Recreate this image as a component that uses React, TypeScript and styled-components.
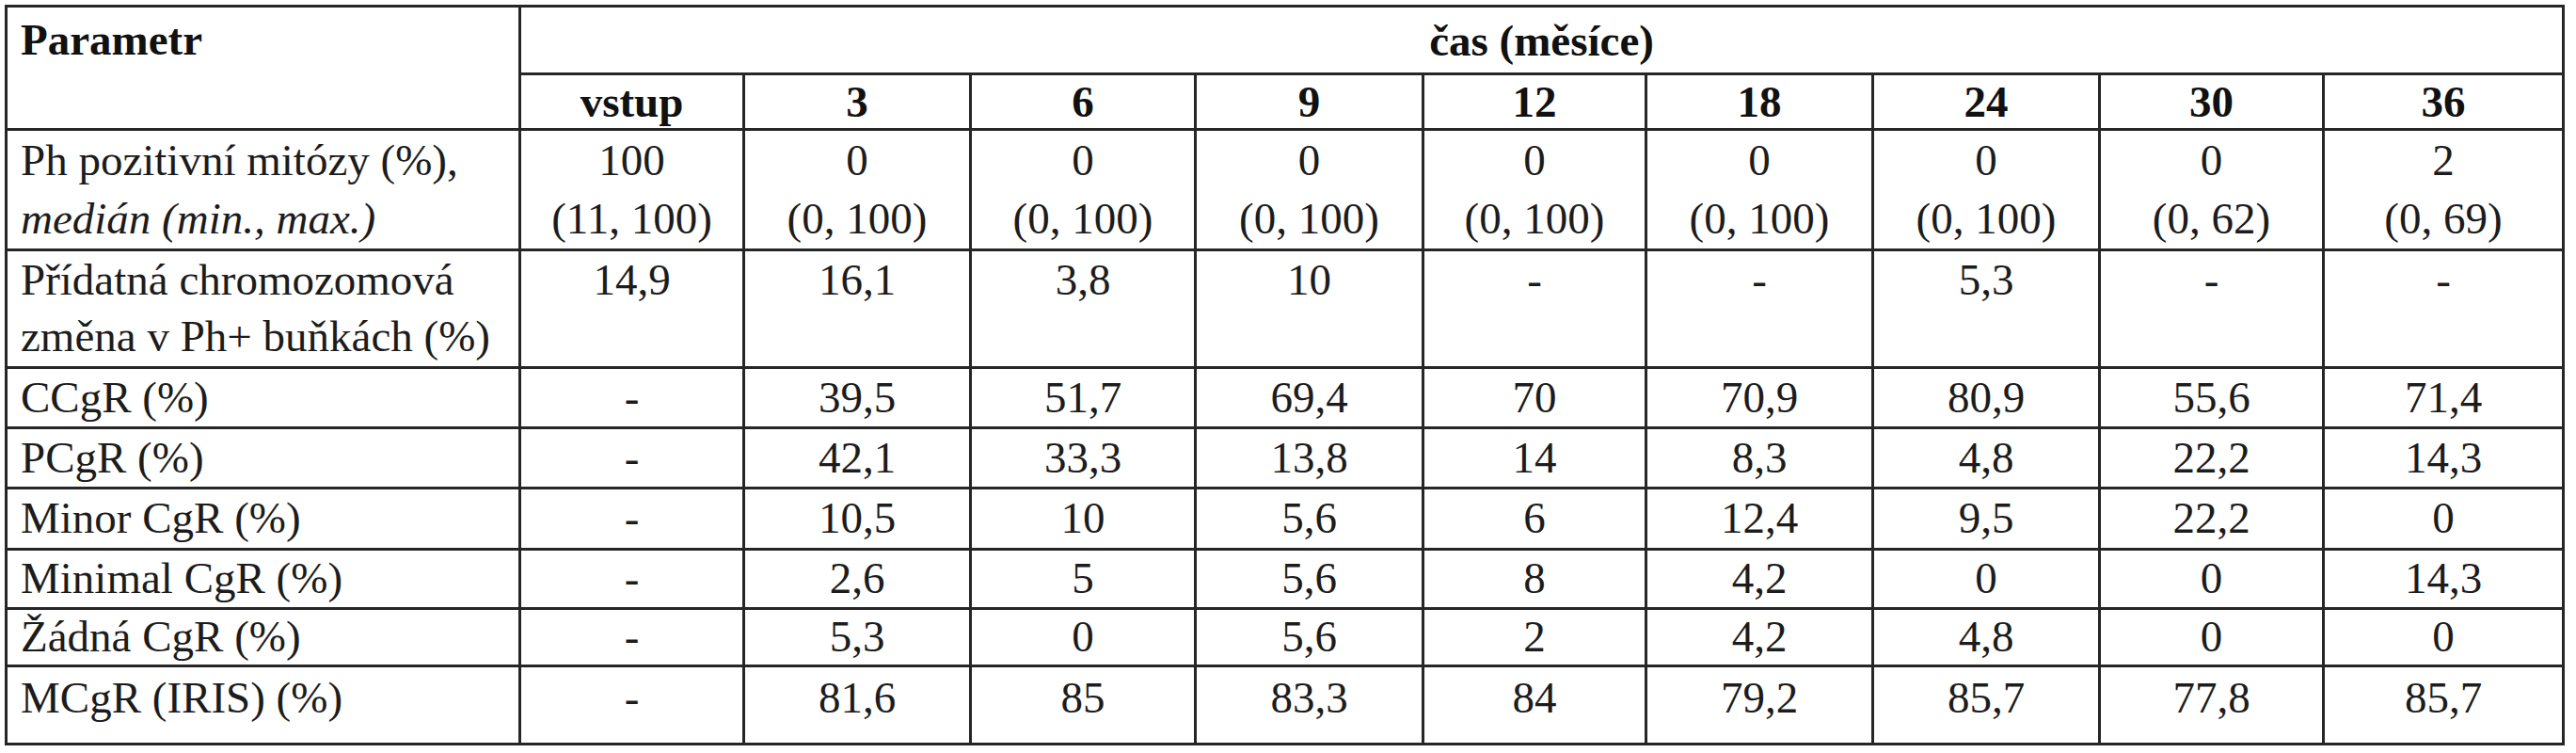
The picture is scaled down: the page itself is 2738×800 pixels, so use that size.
import React from "react";
import styled, { createGlobalStyle } from "styled-components";

const GlobalStyle = createGlobalStyle`
  html, body {
    margin: 0;
    padding: 0;
    background: #ffffff;
  }
  body {
    font-family: "Liberation Serif", "Times New Roman", serif;
    color: #1c1c1c;
  }
`;

const Page = styled.div`
  padding: 5px 0 0 5px;
  width: 2738px;
  height: 800px;
  box-sizing: border-box;
  background: #ffffff;
  overflow: hidden;
`;

const Table = styled.table`
  border-collapse: collapse;
  table-layout: fixed;
  width: 2721px;
  font-family: "Liberation Serif", "Times New Roman", serif;
  font-size: 47px;
  color: #1c1c1c;
`;

const Row = styled.tr<{ $h: number }>`
  height: ${(p) => p.$h}px;
`;

const HeadCell = styled.th<{ $top?: boolean; $lh: number }>`
  border: 3px solid #262626;
  padding: ${(p) => (p.$top ? "4px 14px 0" : "0 4px")};
  font-weight: 700;
  line-height: ${(p) => p.$lh}px;
  text-align: ${(p) => (p.$top ? "left" : "center")};
  vertical-align: ${(p) => (p.$top ? "top" : "middle")};
  white-space: nowrap;
  color: #111;
`;

const LabelCell = styled.td<{ $lh: number; $pt: number }>`
  border: 3px solid #262626;
  padding: ${(p) => p.$pt}px 14px 0;
  line-height: ${(p) => p.$lh}px;
  text-align: left;
  vertical-align: top;
  white-space: nowrap;
`;

const ValueCell = styled.td<{ $lh: number; $pt: number }>`
  border: 3px solid #262626;
  padding: ${(p) => p.$pt}px 4px 0;
  line-height: ${(p) => p.$lh}px;
  text-align: center;
  vertical-align: top;
  white-space: nowrap;
`;

const Italic = styled.span`
  font-style: italic;
`;

const Line = styled.div``;

const colWidths = [546, 238, 241, 239, 242, 237, 241, 241, 238, 255];
const periods = ["vstup", "3", "6", "9", "12", "18", "24", "30", "36"];

type DataRow = {
  label: React.ReactNode;
  values: React.ReactNode[];
  h: number;
  lh: number;
  pt: number;
};

const two = (a: string, b: string) => (
  <>
    <Line>{a}</Line>
    <Line>{b}</Line>
  </>
);

const rows: DataRow[] = [
  {
    label: (
      <>
        <Line>Ph pozitivní mitózy (%),</Line>
        <Line>
          <Italic>medián (min., max.)</Italic>
        </Line>
      </>
    ),
    values: [
      two("100", "(11, 100)"),
      two("0", "(0, 100)"),
      two("0", "(0, 100)"),
      two("0", "(0, 100)"),
      two("0", "(0, 100)"),
      two("0", "(0, 100)"),
      two("0", "(0, 100)"),
      two("0", "(0, 62)"),
      two("2", "(0, 69)"),
    ],
    h: 128,
    lh: 62,
    pt: 0,
  },
  {
    label: two("Přídatná chromozomová", "změna v Ph+ buňkách (%)"),
    values: ["14,9", "16,1", "3,8", "10", "-", "-", "5,3", "-", "-"],
    h: 125,
    lh: 60,
    pt: 0,
  },
  {
    label: "CCgR (%)",
    values: ["-", "39,5", "51,7", "69,4", "70", "70,9", "80,9", "55,6", "71,4"],
    h: 64,
    lh: 60,
    pt: 0,
  },
  {
    label: "PCgR (%)",
    values: ["-", "42,1", "33,3", "13,8", "14", "8,3", "4,8", "22,2", "14,3"],
    h: 64,
    lh: 60,
    pt: 0,
  },
  {
    label: "Minor CgR (%)",
    values: ["-", "10,5", "10", "5,6", "6", "12,4", "9,5", "22,2", "0"],
    h: 65,
    lh: 61,
    pt: 0,
  },
  {
    label: "Minimal CgR (%)",
    values: ["-", "2,6", "5", "5,6", "8", "4,2", "0", "0", "14,3"],
    h: 63,
    lh: 59,
    pt: 0,
  },
  {
    label: "Žádná CgR (%)",
    values: ["-", "5,3", "0", "5,6", "2", "4,2", "4,8", "0", "0"],
    h: 61,
    lh: 57,
    pt: 0,
  },
  {
    label: "MCgR (IRIS) (%)",
    values: ["-", "81,6", "85", "83,3", "84", "79,2", "85,7", "77,8", "85,7"],
    h: 83,
    lh: 60,
    pt: 2,
  },
];

export default function App() {
  return (
    <>
      <GlobalStyle />
      <Page>
        <Table>
          <colgroup>
            {colWidths.map((w, i) => (
              <col key={i} style={{ width: `${w}px` }} />
            ))}
          </colgroup>
          <thead>
            <Row $h={72}>
              <HeadCell $top $lh={60} rowSpan={2}>
                Parametr
              </HeadCell>
              <HeadCell $lh={60} colSpan={9}>
                čas (měsíce)
              </HeadCell>
            </Row>
            <Row $h={59}>
              {periods.map((p) => (
                <HeadCell key={p} $lh={54}>
                  {p}
                </HeadCell>
              ))}
            </Row>
          </thead>
          <tbody>
            {rows.map((r, i) => (
              <Row key={i} $h={r.h}>
                <LabelCell $lh={r.lh} $pt={r.pt}>
                  {r.label}
                </LabelCell>
                {r.values.map((v, j) => (
                  <ValueCell key={j} $lh={r.lh} $pt={r.pt}>
                    {v}
                  </ValueCell>
                ))}
              </Row>
            ))}
          </tbody>
        </Table>
      </Page>
    </>
  );
}
